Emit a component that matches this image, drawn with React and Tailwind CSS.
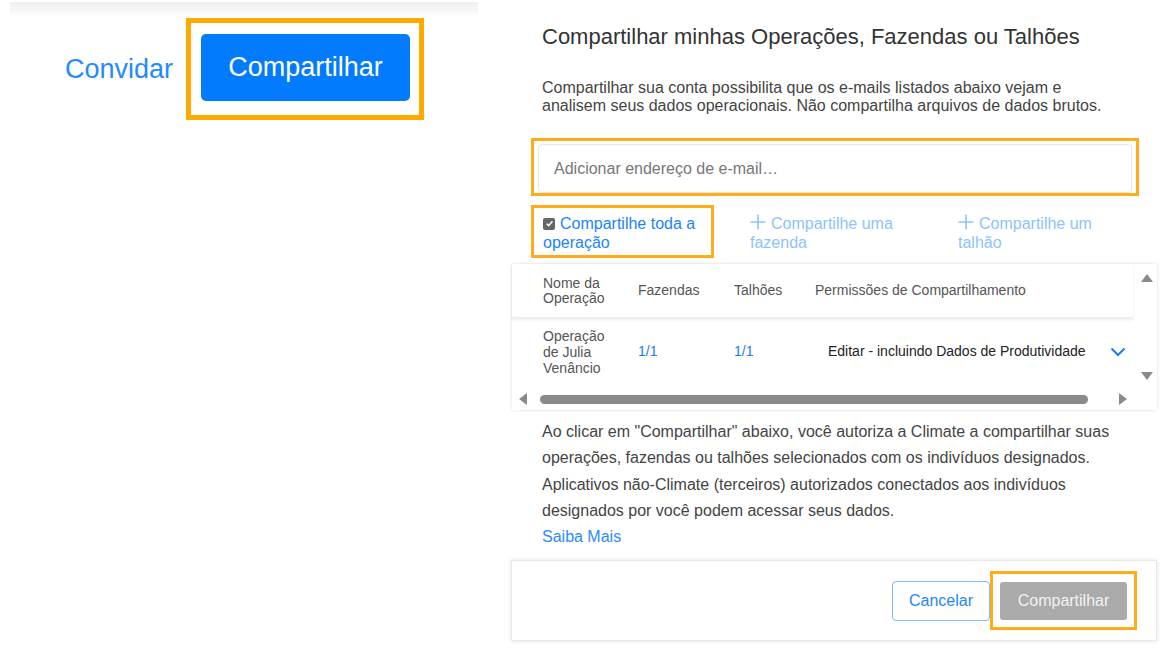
import React from "react";

const font = { fontFamily: '"Liberation Sans", Arial, sans-serif' };

function Plus() {
  return (
    <svg width="16" height="16" viewBox="0 0 16 16" className="inline-block align-[-1px] mr-[5px]">
      <path d="M8 0.5v15M0.5 8h15" stroke="#8cc3ff" strokeWidth="1.6" fill="none" />
    </svg>
  );
}

function CheckBox() {
  return (
    <span className="inline-flex items-center justify-center w-[12px] h-[12px] rounded-[2px] bg-[#666] mr-[5px] align-[1px]">
      <svg width="9" height="9" viewBox="0 0 10 10">
        <path d="M1.8 5.2l2.2 2.2 4.3-4.8" stroke="#fff" strokeWidth="1.7" fill="none" />
      </svg>
    </span>
  );
}

function Chevron() {
  return (
    <svg width="16" height="10" viewBox="0 0 16 10">
      <path d="M1.5 1.5l6.5 6.5 6.5-6.5" stroke="#1a7cf0" strokeWidth="2" fill="none" />
    </svg>
  );
}

function Table() {
  return (
    <div className="ml-[1px] mr-[4px] mt-[6px] h-[146px] flex flex-col shadow-[0_0_3px_rgba(0,0,0,0.15)] bg-white">
      <div className="flex flex-1">
        <div className="flex-1 flex flex-col">
          <div className="h-[54px] grid grid-cols-[95px_96px_81px_1fr] items-center pl-[31px] text-[14px] leading-[15px] text-[#555] shadow-[0_2px_3px_rgba(0,0,0,0.08)] border-b border-[#ececec]">
            <div>
              Nome da
              <br />
              Operação
            </div>
            <div>Fazendas</div>
            <div>Talhões</div>
            <div>Permissões de Compartilhamento</div>
          </div>
          <div className="h-[67px] grid grid-cols-[95px_96px_81px_1fr_40px] items-center pl-[31px] text-[14px]">
            <div className="leading-[16px] text-[#555]">
              Operação
              <br />
              de Julia
              <br />
              Venâncio
            </div>
            <div className="text-[#1a7cf0]">1/1</div>
            <div className="text-[#1a7cf0]">1/1</div>
            <div className="pl-[13px] text-[#222]">Editar - incluindo Dados de Produtividade</div>
            <div className="flex justify-start pl-[17px]">
              <Chevron />
            </div>
          </div>
        </div>
        <div className="w-[24px] flex flex-col items-center justify-between pt-[10px] pb-[8px] pl-[3px]">
          <div className="w-0 h-0 border-l-[6px] border-r-[6px] border-b-[8px] border-l-transparent border-r-transparent border-b-[#8a8a8a]" />
          <div className="w-0 h-0 border-l-[6px] border-r-[6px] border-t-[8px] border-l-transparent border-r-transparent border-t-[#8a8a8a]" />
        </div>
      </div>
      <div className="h-[22px] flex items-center pl-[7px] pr-[30px]">
        <div className="w-0 h-0 border-t-[6px] border-b-[6px] border-r-[8px] border-t-transparent border-b-transparent border-r-[#8a8a8a]" />
        <div className="ml-[13px] w-[548px] h-[9px] rounded-full bg-[#8a8a8a]" />
        <div className="flex-1" />
        <div className="w-0 h-0 border-t-[6px] border-b-[6px] border-l-[8px] border-t-transparent border-b-transparent border-l-[#8a8a8a]" />
      </div>
    </div>
  );
}

export default function App() {
  return (
    <div className="w-[1165px] h-[658px] bg-white flex" style={font}>
      {/* left: page header with buttons */}
      <div className="w-[478px] pl-[10px] shrink-0">
        <div className="h-[15px] mt-[2px] bg-gradient-to-b from-[#eeeeee] to-white" />
        <div className="flex items-center pl-[55px] mt-[1px]">
          <span className="text-[27px] text-[#1f8bff] mr-[13px]">Convidar</span>
          <div className="border-[5px] border-[#ffa800] pt-[11px] pb-[14px] pl-[10px] pr-[9px]">
            <button className="w-[209px] h-[67px] rounded-[5px] bg-[#037bff] text-white text-[27px]">
              Compartilhar
            </button>
          </div>
        </div>
      </div>

      {/* right: share dialog */}
      <div className="w-[650px] ml-[33px] shrink-0">
        <h1 className="pl-[31px] mt-[24px] text-[22px] leading-[26px] text-[#333]">
          Compartilhar minhas Operações, Fazendas ou Talhões
        </h1>
        <p className="pl-[31px] mt-[29px] text-[16px] leading-[18px] text-[#444]">
          Compartilhar sua conta possibilita que os e-mails listados abaixo vejam e
          <br />
          analisem seus dados operacionais. Não compartilha arquivos de dados brutos.
        </p>
        <div className="ml-[20px] mr-[22px] mt-[23px] border-[3px] border-[#ffab1a] pt-[3px] px-[4px]">
          <div className="h-[49px] border border-[#e6e6e6] rounded-[4px] flex items-center pl-[15px] text-[16px] text-[#777]">
            Adicionar endereço de e-mail…
          </div>
        </div>
        <div className="flex mt-[9px] text-[16px] leading-[19px]">
          <div className="ml-[20px] w-[183px] h-[53px] border-[3px] border-[#ffab1a] pl-[9px] pt-[6px] text-[#1a84ff]">
            <CheckBox />
            Compartilhe toda a operação
          </div>
          <div className="ml-[36px] w-[170px] pt-[9px] text-[#8cc3ff]">
            <Plus />
            Compartilhe uma fazenda
          </div>
          <div className="ml-[38px] w-[150px] pt-[9px] text-[#8cc3ff]">
            <Plus />
            Compartilhe um talhão
          </div>
        </div>
        <Table />
        <p className="pl-[31px] mt-[9px] text-[16px] leading-[26.3px] text-[#444]">
          Ao clicar em "Compartilhar" abaixo, você autoriza a Climate a compartilhar suas
          <br />
          operações, fazendas ou talhões selecionados com os indivíduos designados.
          <br />
          Aplicativos não-Climate (terceiros) autorizados conectados aos indivíduos
          <br />
          designados por você podem acessar seus dados.
        </p>
        <a className="block pl-[31px] text-[16px] leading-[26px] text-[#2a8cff]">Saiba Mais</a>
        <div className="mt-[10px] mr-[4px] h-[81px] border border-[#e8e8e8] shadow-[0_0_4px_rgba(0,0,0,0.12)] flex items-center justify-end pr-[19px]">
          <button className="w-[98px] h-[40px] border border-[#7ab8ff] rounded-[4px] text-[16px] text-[#2289f5] bg-white">
            Cancelar
          </button>
          <div className="border-[3px] border-[#ffab1a] px-[7px] pt-[8px] pb-[7px]">
            <button className="w-[127px] h-[38px] rounded-[3px] bg-[#aaaaaa] text-[16px] text-[#f2f2f2]">
              Compartilhar
            </button>
          </div>
        </div>
      </div>
    </div>
  );
}
